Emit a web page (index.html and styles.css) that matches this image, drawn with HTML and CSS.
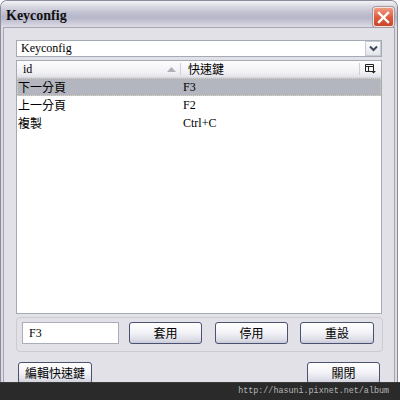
FILE: index.html
```html
<!DOCTYPE html>
<html lang="zh-Hant">
<head>
    <meta charset="UTF-8">
    <title>Keyconfig</title>
    <link rel="stylesheet" href="styles.css">
</head>
<body>
    <div class="window">
        <!-- Title bar -->
        <div class="titlebar">
            <span class="title">Keyconfig</span>
            <div class="close-btn" aria-label="Close">
                <svg width="13" height="13" viewBox="0 0 13 13">
                    <path d="M2 2 L11 11 M11 2 L2 11" stroke="#fff" stroke-width="2.4" stroke-linecap="square"/>
                </svg>
            </div>
        </div>

        <div class="client">
            <!-- Profile combo -->
            <div class="combo">
                <span class="combo-text">Keyconfig</span>
                <span class="combo-drop">
                    <svg width="9" height="7" viewBox="0 0 9 7">
                        <path d="M1 1.5 L4.5 5 L8 1.5" fill="none" stroke="#3c4a5c" stroke-width="2"/>
                    </svg>
                </span>
            </div>

            <!-- Key list -->
            <div class="listview">
                <div class="lv-header">
                    <div class="h-id">
                        <span>id</span>
                        <svg class="sort-arrow" width="9" height="5" viewBox="0 0 9 5">
                            <path d="M0 5 L4.5 0 L9 5 Z" fill="#aeb2b8"/>
                        </svg>
                    </div>
                    <div class="h-key">快速鍵</div>
                    <div class="h-pick">
                        <svg width="11" height="10" viewBox="0 0 11 10">
                            <path d="M0.5 0.5 H8.5 V7.5 H0.5 Z M0.5 2.5 H8.5 M3.5 2.5 V7.5" fill="none" stroke="#222" stroke-width="1"/>
                            <path d="M6 7 H11 L8.5 9.5 Z" fill="#222"/>
                        </svg>
                    </div>
                </div>
                <div class="lv-row selected">
                    <span class="c-id">下一分頁</span>
                    <span class="c-key">F3</span>
                </div>
                <div class="lv-row">
                    <span class="c-id">上一分頁</span>
                    <span class="c-key">F2</span>
                </div>
                <div class="lv-row">
                    <span class="c-id">複製</span>
                    <span class="c-key">Ctrl+C</span>
                </div>
            </div>

            <!-- Editing group -->
            <div class="group">
                <div class="textbox">F3</div>
                <button class="btn btn-apply">套用</button>
                <button class="btn btn-disable">停用</button>
                <button class="btn btn-reset">重設</button>
            </div>

            <!-- Footer buttons -->
            <div class="footer">
                <button class="btn btn-edit">編輯快速鍵</button>
                <button class="btn btn-close">關閉</button>
            </div>
        </div>
    </div>

    <div class="watermark">http://hasuni.pixnet.net/album</div>
</body>
</html>
```

FILE: styles.css
```css
* {
    box-sizing: border-box;
}

body {
    margin: 0;
    width: 400px;
    height: 400px;
    overflow: hidden;
    background: #ffffff;
    font-family: "Liberation Serif", "Noto Sans CJK TC", serif;
    font-size: 12px;
    color: #000;
}

.window {
    width: 398px;
    height: 400px;
    border: 1px solid #8b8b9b;
    border-bottom: none;
    border-radius: 7px 7px 0 0;
    background: #dddce3;
    padding: 0 2px;
}

.titlebar {
    height: 26px;
    display: flex;
    justify-content: space-between;
    align-items: flex-start;
    padding: 0 1px 0 5px;
    margin: 0 -2px;
    border-radius: 6px 6px 0 0;
    background: linear-gradient(#f4f4f7 0%, #dcdce4 18%, #bdbdcf 50%, #b6b6ca 65%, #cfcfdc 88%, #dedde5 100%);
}

.title {
    font-family: "Liberation Serif", serif;
    font-weight: bold;
    font-size: 14px;
    line-height: 26px;
    padding-top: 2px;
    color: #101010;
}

.close-btn {
    width: 21px;
    height: 20px;
    margin-top: 6px;
    margin-right: 2px;
    border: 1px solid #f4e4e4;
    border-radius: 3px;
    box-shadow: 0 0 0 1px #a89a9e;
    background: linear-gradient(#ee9a82, #dc5a3c 55%, #c8452a);
    display: flex;
    align-items: center;
    justify-content: center;
}

.client {
    height: 374px;
    border: 1px solid #a6a5b4;
    border-bottom: none;
    background: #e2e1e7;
    padding: 12px 12px 0 12px;
}

.combo {
    width: 366px;
    height: 17px;
    border: 1px solid #a5abb6;
    background: #fff;
    display: flex;
    align-items: center;
    justify-content: space-between;
}

.combo-text {
    padding-left: 4px;
    line-height: 15px;
}

.combo-drop {
    width: 16px;
    height: 15px;
    border: 1px solid #c6cad2;
    background: linear-gradient(#fbfbfc, #e4e5ea);
    display: flex;
    align-items: center;
    justify-content: center;
}

.listview {
    width: 366px;
    height: 254px;
    margin-top: 3px;
    border: 1px solid #a5abb6;
    background: #fff;
}

.lv-header {
    height: 17px;
    display: flex;
    background: linear-gradient(#fdfdfe, #f1f1f5 70%, #e2e2ea);
    border-bottom: 1px solid #d6d6de;
}

.h-id {
    width: 164px;
    padding: 0 4px 0 6px;
    display: flex;
    align-items: center;
    justify-content: space-between;
    border-right: 1px solid #cfd0d6;
    margin: 2px 0;
}

.h-key {
    flex: 1;
    padding-left: 7px;
    display: flex;
    align-items: center;
    border-right: 1px solid #cfd0d6;
    margin: 2px 0;
}

.h-pick {
    width: 21px;
    display: flex;
    align-items: center;
    justify-content: center;
}

.lv-row {
    height: 18px;
    display: flex;
    align-items: center;
}

.lv-row.selected {
    background: #b3b5bf;
    outline: 1px dotted #d8d2ba;
    outline-offset: -1px;
}

.c-id {
    width: 166px;
    padding-left: 1px;
}

.c-key {
    flex: 1;
}

.group {
    width: 367px;
    height: 35px;
    margin-top: 3px;
    border: 1px solid #cbcbd0;
    border-radius: 4px;
    padding: 4px 0 0 5px;
    display: flex;
    align-items: flex-start;
}

.textbox {
    width: 97px;
    height: 22px;
    border: 1px solid #a9aeb8;
    background: #fff;
    padding-left: 6px;
    line-height: 20px;
}

.btn {
    height: 22px;
    padding: 0;
    border: 1px solid #4a5272;
    border-radius: 3px;
    background: linear-gradient(#ffffff, #f4f4f8 45%, #dcdce6 85%, #c9cad8);
    font-family: "Noto Sans CJK TC", "Liberation Sans", sans-serif;
    font-size: 12px;
    line-height: 20px;
    color: #000;
}

.btn-apply {
    width: 73px;
    margin-left: 10px;
}

.btn-disable {
    width: 73px;
    margin-left: 13px;
}

.btn-reset {
    width: 74px;
    margin-left: 12px;
}

.footer {
    display: flex;
    margin-top: 10px;
}

.btn-edit {
    width: 74px;
    margin-left: 2px;
}

.btn-close {
    width: 73px;
    margin-left: auto;
    margin-right: 2px;
}

/* overlay watermark strip */
.watermark {
    position: absolute;
    left: 0;
    top: 382px;
    width: 400px;
    height: 18px;
    background: #2a2a2a;
    border-top: 1px solid #3a3a3a;
    color: #b6b6b6;
    font-family: "Liberation Mono", monospace;
    font-size: 8.4px;
    line-height: 17px;
    text-align: right;
    padding-right: 11px;
}
```
